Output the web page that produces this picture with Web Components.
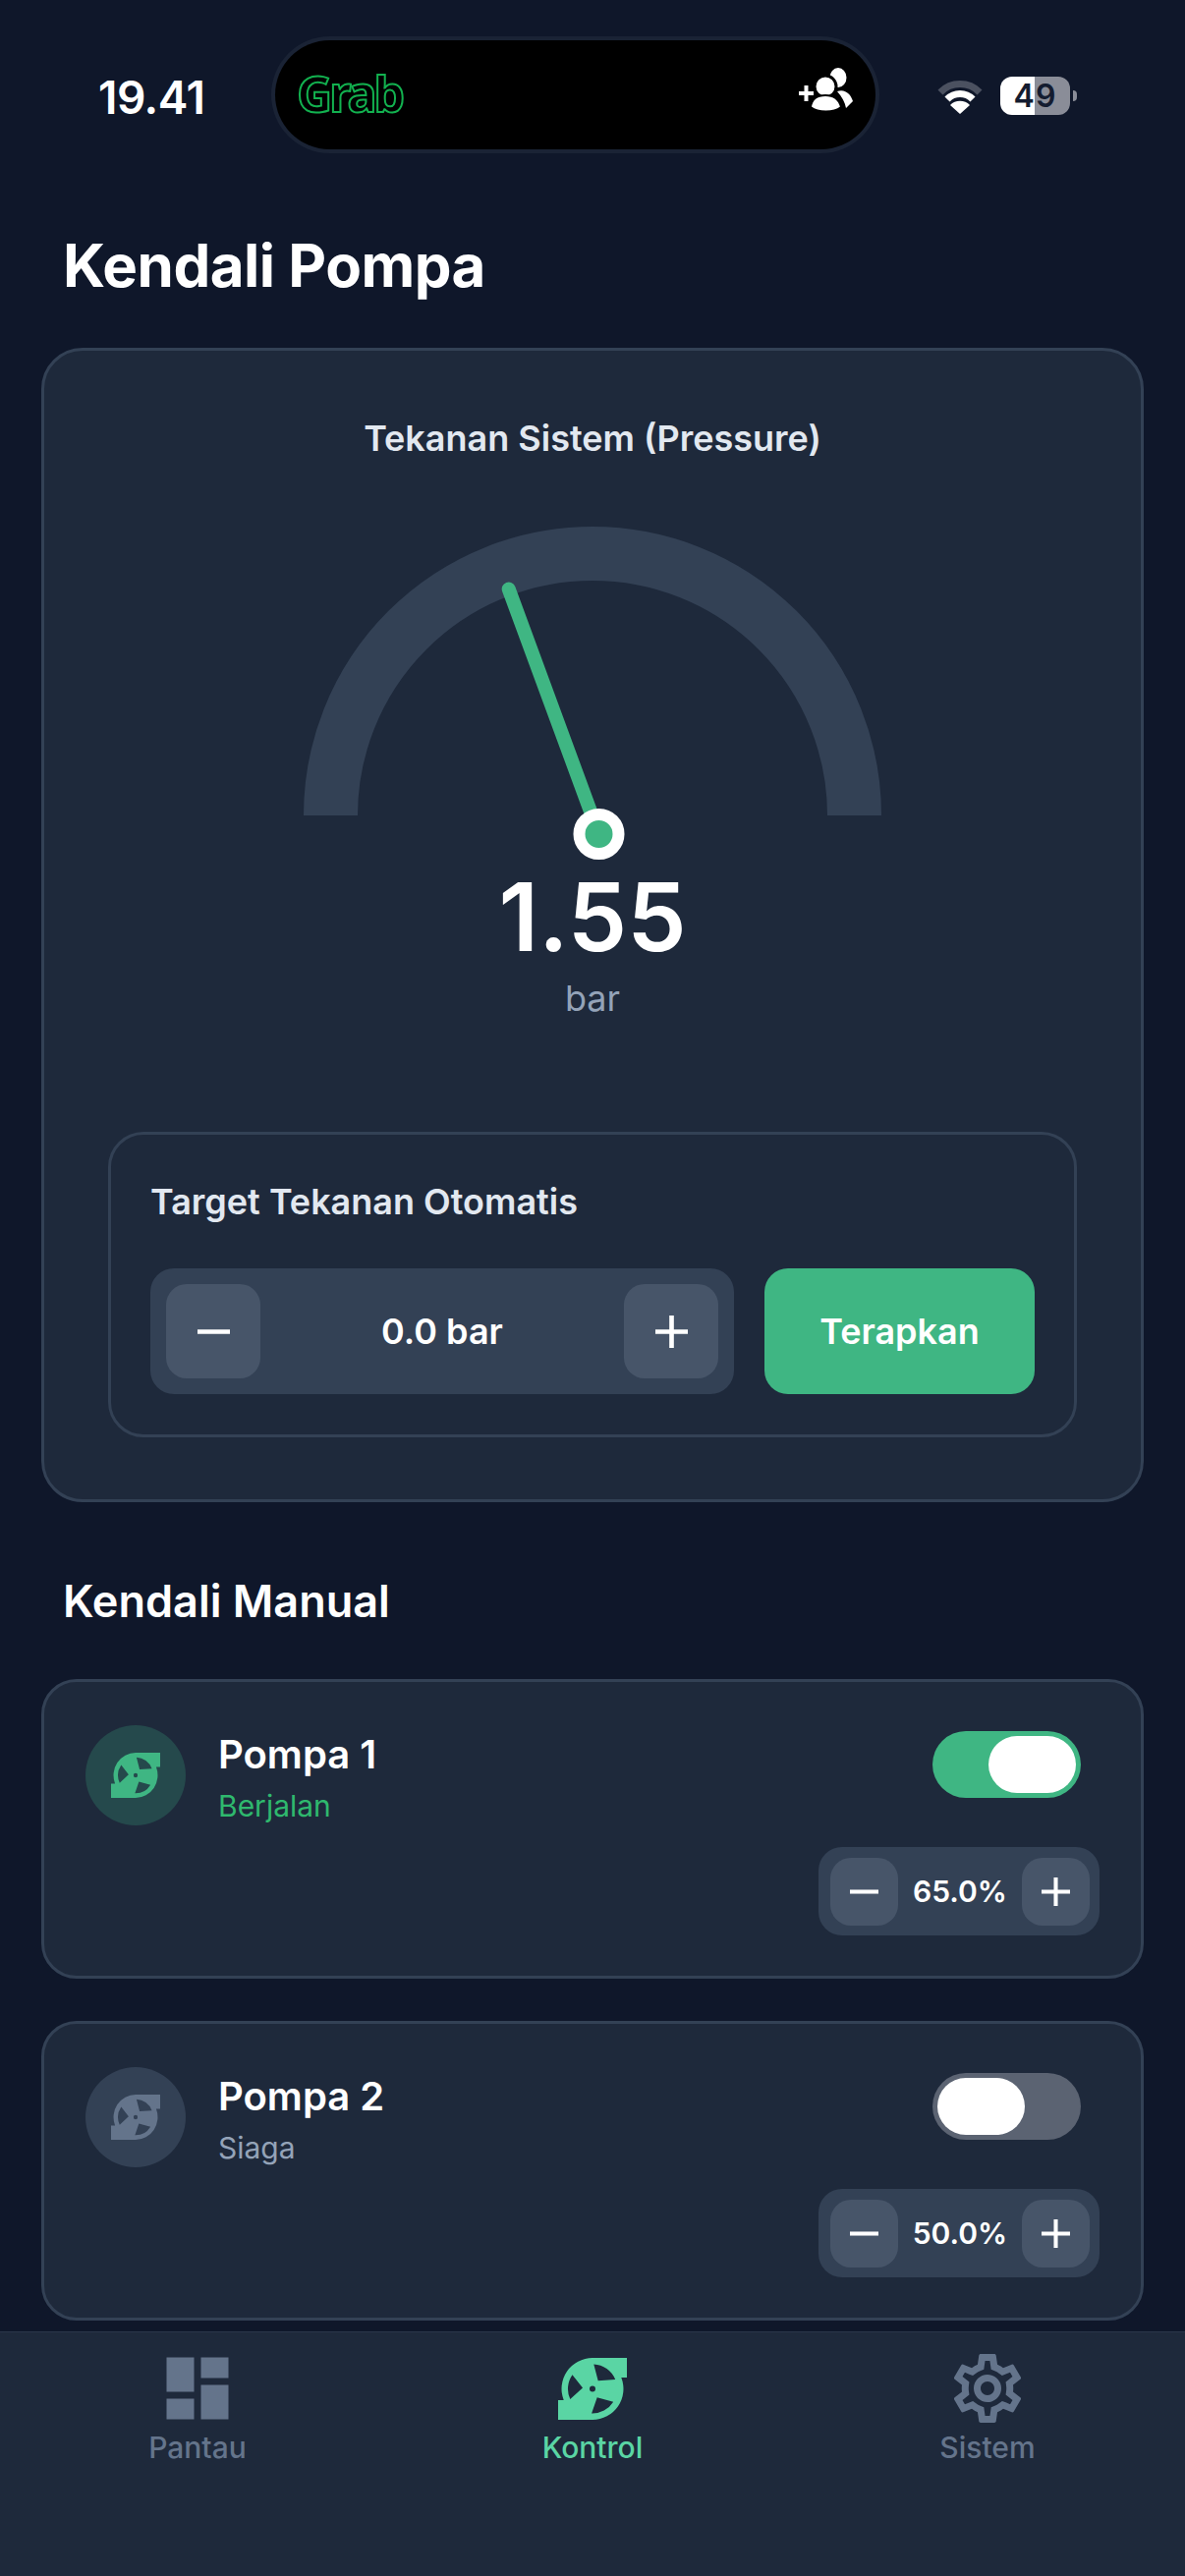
<!DOCTYPE html>
<html lang="id">
<head>
<meta charset="utf-8">
<title>Kendali Pompa</title>
<style>
    html, body { margin: 0; padding: 0; background: #0f172a; }
    body { font-family: Inter, "Noto Sans", sans-serif; font-optical-sizing: none; color: #fff; }
</style>
</head>
<body>
<pump-app></pump-app>

<script>
(function() {
    // pump glyph shared by the cards and the nav bar
    const PUMP_PATH = 'M35 0H70V20H64.3A31.5 31.5 0 0 1 35 63H0V43H5.7A31.5 31.5 0 0 1 35 0Z' +
        'M40.7 23.3L36.3 6.5A25 25 0 0 1 58.2 22.1Z' +
        'M39.7 40.3L56.2 44.75A25 25 0 0 1 34.1 56.5Z' +
        'M25 30.6L12.3 42.07A25 25 0 0 1 14.5 17.2Z' +
        'M35 28.5a3 3 0 1 0 0 6a3 3 0 1 0 0-6Z';

    const GEAR_PATH = 'M19.43 12.98c.04-.32.07-.64.07-.98 0-.34-.03-.66-.07-.98l2.11-1.65c.19-.15.24-.42.12-.64l-2-3.46c-.09-.16-.26-.25-.44-.25-.06 0-.12.01-.17.03l-2.49 1c-.52-.4-1.08-.73-1.69-.98l-.38-2.65C14.46 2.18 14.25 2 14 2h-4c-.25 0-.46.18-.49.42l-.38 2.65c-.61.25-1.17.59-1.69.98l-2.49-1c-.06-.02-.12-.03-.18-.03-.17 0-.34.09-.43.25l-2 3.46c-.13.22-.07.49.12.64l2.11 1.65c-.04.32-.07.65-.07.98 0 .33.03.66.07.98l-2.11 1.65c-.19.15-.24.42-.12.64l2 3.46c.09.16.26.25.44.25.06 0 .12-.01.17-.03l2.49-1c.52.4 1.08.73 1.69.98l.38 2.65c.03.24.24.42.49.42h4c.25 0 .46-.18.49-.42l.38-2.65c.61-.25 1.17-.59 1.69-.98l2.49 1c.06.02.12.03.18.03.17 0 .34-.09.43-.25l2-3.46c.12-.22.07-.49-.12-.64l-2.11-1.65zm-1.98-1.71c.04.31.05.52.05.73 0 .21-.02.43-.05.73l-.14 1.13.89.7 1.08.84-.7 1.21-1.27-.51-1.04-.42-.9.68c-.43.32-.84.56-1.25.73l-1.06.43-.16 1.13-.2 1.35h-1.4l-.19-1.35-.16-1.13-1.06-.43c-.43-.18-.83-.41-1.23-.71l-.91-.7-1.06.43-1.27.51-.7-1.21 1.08-.84.89-.7-.14-1.13c-.03-.31-.05-.54-.05-.74s.02-.43.05-.73l.14-1.13-.89-.7-1.08-.84.7-1.21 1.27.51 1.04.42.9-.68c.43-.32.84-.56 1.25-.73l1.06-.43.16-1.13.2-1.35h1.39l.19 1.35.16 1.13 1.06.43c.43.18.83.41 1.23.71l.91.7 1.06-.43 1.27-.51.7 1.21-1.07.85-.89.7.14 1.13zM12 8c-2.21 0-4 1.79-4 4s1.79 4 4 4 4-1.79 4-4-1.79-4-4-4zm0 6c-1.1 0-2-.9-2-2s.9-2 2-2 2 .9 2 2-.9 2-2 2z';

    const DASH_PATH = 'M3 13h8V3H3v10zm0 8h8v-6H3v6zm10 0h8V11h-8v10zm0-18v6h8V3h-8z';

    function define(name, html, Base) {
        const template = document.createElement('template');
        template.innerHTML = html;
        customElements.define(name, class extends (Base || HTMLElement) {
            constructor() {
                super();
                this.attachShadow({ mode: 'open' });
                this.shadowRoot.appendChild(template.content.cloneNode(true));
            }
            connectedCallback() {
                if (this.update) this.update();
            }
        });
    }

    define('status-bar', `
        <style>
            :host { display: flex; align-items: flex-start; height: 160px; box-sizing: border-box; padding-top: 41px; }
            .time { width: 280px; box-sizing: border-box; padding: 30px 0 0 100px; font-size: 46px; line-height: 56px; font-weight: 600; letter-spacing: -.5px; }
            .island { width: 611px; height: 111px; box-sizing: border-box; background: #000; border-radius: 56px; box-shadow: 0 0 0 4px #1a2335; display: flex; align-items: center; justify-content: space-between; padding: 0 22px 0 22px; }
            .grab { font-family: "Noto Sans", sans-serif; font-size: 50px; line-height: 60px; font-weight: 700; letter-spacing: -3px; color: #000; -webkit-text-stroke: 2px #12b14f; margin-top: -4px; }
            .right { display: flex; margin-left: 62px; align-items: center; padding-top: 37px; }
            .battery { display: flex; align-items: center; margin-left: 17px; }
            .cell { position: relative; width: 71px; height: 39px; border-radius: 12px; overflow: hidden; background: linear-gradient(90deg, #fff 49%, #8a8d98 49%); color: #141c30; font-size: 32px; line-height: 39px; font-weight: 600; text-align: center; letter-spacing: 1px; }
            .cap { width: 4px; height: 11px; margin-left: 3px; background: #8a8d98; border-radius: 0 4px 4px 0; }
            svg { display: block; }
        </style>
        <div class="time">19.41</div>
        <div class="island">
            <span class="grab">Grab</span>
            <svg width="57" height="44" viewBox="0 0 57 44" style="margin-top:-11px">
                <path d="M8.5 18v16M1 26h15" stroke="#fff" stroke-width="4" fill="none"/>
                <ellipse cx="41" cy="10" rx="8.5" ry="10" fill="#fff"/>
                <path d="M40 24c8-3 14 3 16 10l-7 7c-1-6-4-11-9-17z" fill="#fff"/>
                <circle cx="28" cy="19" r="11" fill="#fff" stroke="#000" stroke-width="3"/>
                <path d="M13 40c1-8 7-12 15-12s14 4 16 12c-8 6-23 6-31 0z" fill="#fff" stroke="#000" stroke-width="2"/>
            </svg>
        </div>
        <div class="right">
            <svg width="48" height="37" viewBox="0 0 48 37">
                <path d="M4 15a28 28 0 0 1 40 0" fill="none" stroke="#4b5160" stroke-width="7"/>
                <path d="M11 22a18 18 0 0 1 26 0" fill="none" stroke="#fff" stroke-width="7"/>
                <path d="M24 37l-10-9a14 14 0 0 1 20 0z" fill="#fff"/>
            </svg>
            <div class="battery">
                <div class="cell">49</div>
                <div class="cap"></div>
            </div>
        </div>
    `);

    define('pressure-gauge', `
        <style>
            :host { display: flex; flex-direction: column; align-items: center; }
            .title { font-size: 36px; line-height: 44px; font-weight: 600; color: #e2e8f0; }
            svg { display: block; margin-top: 68px; }
            .value { margin-top: 9px; font-size: 96px; line-height: 96px; font-weight: 600; color: #fff; }
            .unit { margin-top: 13px; font-size: 36px; line-height: 44px; color: #94a3b8; }
        </style>
        <div class="title">Tekanan Sistem (Pressure)</div>
        <svg width="600" height="340" viewBox="0 0 600 340">
            <path d="M33.5 294A266.5 266.5 0 0 1 566.5 294" fill="none" stroke="#334155" stroke-width="55"/>
            <line x1="214.7" y1="63.5" x2="306.5" y2="313" stroke="#3fb683" stroke-width="14" stroke-linecap="round"/>
            <circle cx="306.5" cy="313" r="20" fill="#3fb683" stroke="#fff" stroke-width="12"/>
        </svg>
        <div class="value">1.55</div>
        <div class="unit">bar</div>
    `);

    define('step-control', `
        <style>
            :host { display: flex; align-items: center; box-sizing: border-box; background: #334155; --btn: 96px; border-radius: 24px; font-weight: 600; color: #fff; }
            .label { flex: 1; text-align: center; }
            .btn { width: var(--btn); height: var(--btn); border-radius: 21px; background: #475569; display: flex; align-items: center; justify-content: center; }
            svg { display: block; width: var(--glyph); height: var(--glyph); }
        </style>
        <div class="btn"><svg viewBox="0 0 32 32"><path d="M0 16H32" stroke="#fff" stroke-width="4.5"/></svg></div>
        <div class="label"><slot></slot></div>
        <div class="btn"><svg viewBox="0 0 32 32"><path d="M0 16H32M16 0V32" stroke="#fff" stroke-width="4.5"/></svg></div>
    `);

    define('target-panel', `
        <style>
            :host { display: block; box-sizing: border-box; border: 3px solid #334155; border-radius: 36px; padding: 46px 40px 41px; }
            .label { font-size: 36px; line-height: 44px; font-weight: 600; color: #e2e8f0; }
            .row { display: flex; gap: 31px; margin-top: 46px; }
            step-control { flex: 1; height: 128px; padding: 0 16px; font-size: 36px; --glyph: 33px; }
            .apply { width: 275px; height: 128px; border-radius: 24px; background: #3fb683; color: #fff; font-size: 36px; font-weight: 600; display: flex; align-items: center; justify-content: center; }
        </style>
        <div class="label">Target Tekanan Otomatis</div>
        <div class="row">
            <step-control>0.0 bar</step-control>
            <div class="apply">Terapkan</div>
        </div>
    `);

    define('pump-toggle', `
        <style>
            :host { display: flex; width: 151px; height: 68px; box-sizing: border-box; padding: 5px; border-radius: 34px; background: #5b6372; }
            :host([on]) { background: #3fb683; justify-content: flex-end; }
            .knob { width: 89px; height: 58px; border-radius: 29px; background: #fff; }
        </style>
        <div class="knob"></div>
    `);

    define('pump-card', `
        <style>
            :host { display: flex; flex-direction: column; box-sizing: border-box; height: 305px; background: #1e293b; border: 3px solid #334155; border-radius: 36px; padding: 44px 42px 41px; }
            .top { display: flex; align-items: flex-start; }
            .badge { width: 102px; height: 102px; border-radius: 50%; display: flex; align-items: center; justify-content: center; background: #334155; flex: none; }
            .badge svg { display: block; width: 50px; height: 46px; fill: #64748b; }
            :host([on]) .badge { background: #25494c; }
            :host([on]) .badge svg { fill: #3fb683; }
            .text { flex: 1; margin: 6px 0 0 33px; }
            .name { font-size: 40px; line-height: 48px; font-weight: 600; color: #fff; }
            .state { margin-top: 8px; font-size: 30px; line-height: 40px; color: #94a3b8; }
            :host([on]) .state { color: #2fb96e; }
            pump-toggle { margin: 6px 19px 0 0; }
            step-control { align-self: flex-end; margin-top: 22px; width: 286px; height: 90px; padding: 0 10px 0 12px; --btn: 69px; --glyph: 29px; font-size: 30px; border-radius: 24px; }
        </style>
        <div class="top">
            <div class="badge"><svg viewBox="0 0 70 63" preserveAspectRatio="none"><path fill-rule="evenodd" d="${PUMP_PATH}"/></svg></div>
            <div class="text">
                <div class="name"><slot name="name"></slot></div>
                <div class="state"><slot name="state"></slot></div>
            </div>
            <pump-toggle></pump-toggle>
        </div>
        <step-control><slot name="speed"></slot></step-control>
    `, class extends HTMLElement {
        update() {
            if (this.hasAttribute('on')) {
                this.shadowRoot.querySelector('pump-toggle').setAttribute('on', '');
            }
        }
    });

    define('nav-item', `
        <style>
            :host { flex: 1; display: flex; flex-direction: column; align-items: center; color: #64748b; }
            :host([active]) { color: #5ad5a4; }
            .icon { height: 84px; display: flex; align-items: center; justify-content: center; }
            .label { margin-top: 0; font-size: 30px; line-height: 36px; font-weight: 500; }
        </style>
        <div class="icon"><slot name="icon"></slot></div>
        <div class="label"><slot></slot></div>
    `);

    define('bottom-nav', `
        <style>
            :host { display: flex; box-sizing: border-box; height: 249px; padding-top: 15px; background: #1e293b; border-top: 1px solid #2a3649; }
            svg { display: block; fill: currentColor; }
        </style>
        <nav-item>
            <svg slot="icon" width="84" height="84" viewBox="0 0 24 24" fill="currentColor"><path d="${DASH_PATH}"/></svg>
            Pantau
        </nav-item>
        <nav-item active>
            <svg slot="icon" width="70" height="63" viewBox="0 0 70 63" fill="currentColor"><path fill-rule="evenodd" d="${PUMP_PATH}"/></svg>
            Kontrol
        </nav-item>
        <nav-item>
            <svg slot="icon" width="84" height="84" viewBox="0 0 24 24" fill="currentColor"><path d="${GEAR_PATH}"/></svg>
            Sistem
        </nav-item>
    `);

    define('pump-app', `
        <style>
            :host { display: flex; flex-direction: column; height: 2622px; overflow: hidden; background: #0f172a; }
            main { flex: 1; padding: 0 42px; }
            h1 { margin: 0 0 0 22px; padding-top: 74px; font-size: 60px; line-height: 72px; font-weight: 700; letter-spacing: -.5px; color: #fff; }
            .panel { margin-top: 48px; box-sizing: border-box; background: #1e293b; border: 3px solid #334155; border-radius: 42px; padding: 67px 65px 63px; }
            target-panel { margin-top: 114px; }
            h2 { margin: 71px 0 49px 22px; font-size: 45px; line-height: 60px; font-weight: 600; color: #fff; }
            pump-card + pump-card { margin-top: 43px; }
        </style>
        <status-bar></status-bar>
        <main>
            <h1>Kendali Pompa</h1>
            <section class="panel">
                <pressure-gauge></pressure-gauge>
                <target-panel></target-panel>
            </section>
            <h2>Kendali Manual</h2>
            <pump-card on>
                <span slot="name">Pompa 1</span>
                <span slot="state">Berjalan</span>
                <span slot="speed">65.0%</span>
            </pump-card>
            <pump-card>
                <span slot="name">Pompa 2</span>
                <span slot="state">Siaga</span>
                <span slot="speed">50.0%</span>
            </pump-card>
        </main>
        <bottom-nav></bottom-nav>
    `);
})();
</script>
</body>
</html>
